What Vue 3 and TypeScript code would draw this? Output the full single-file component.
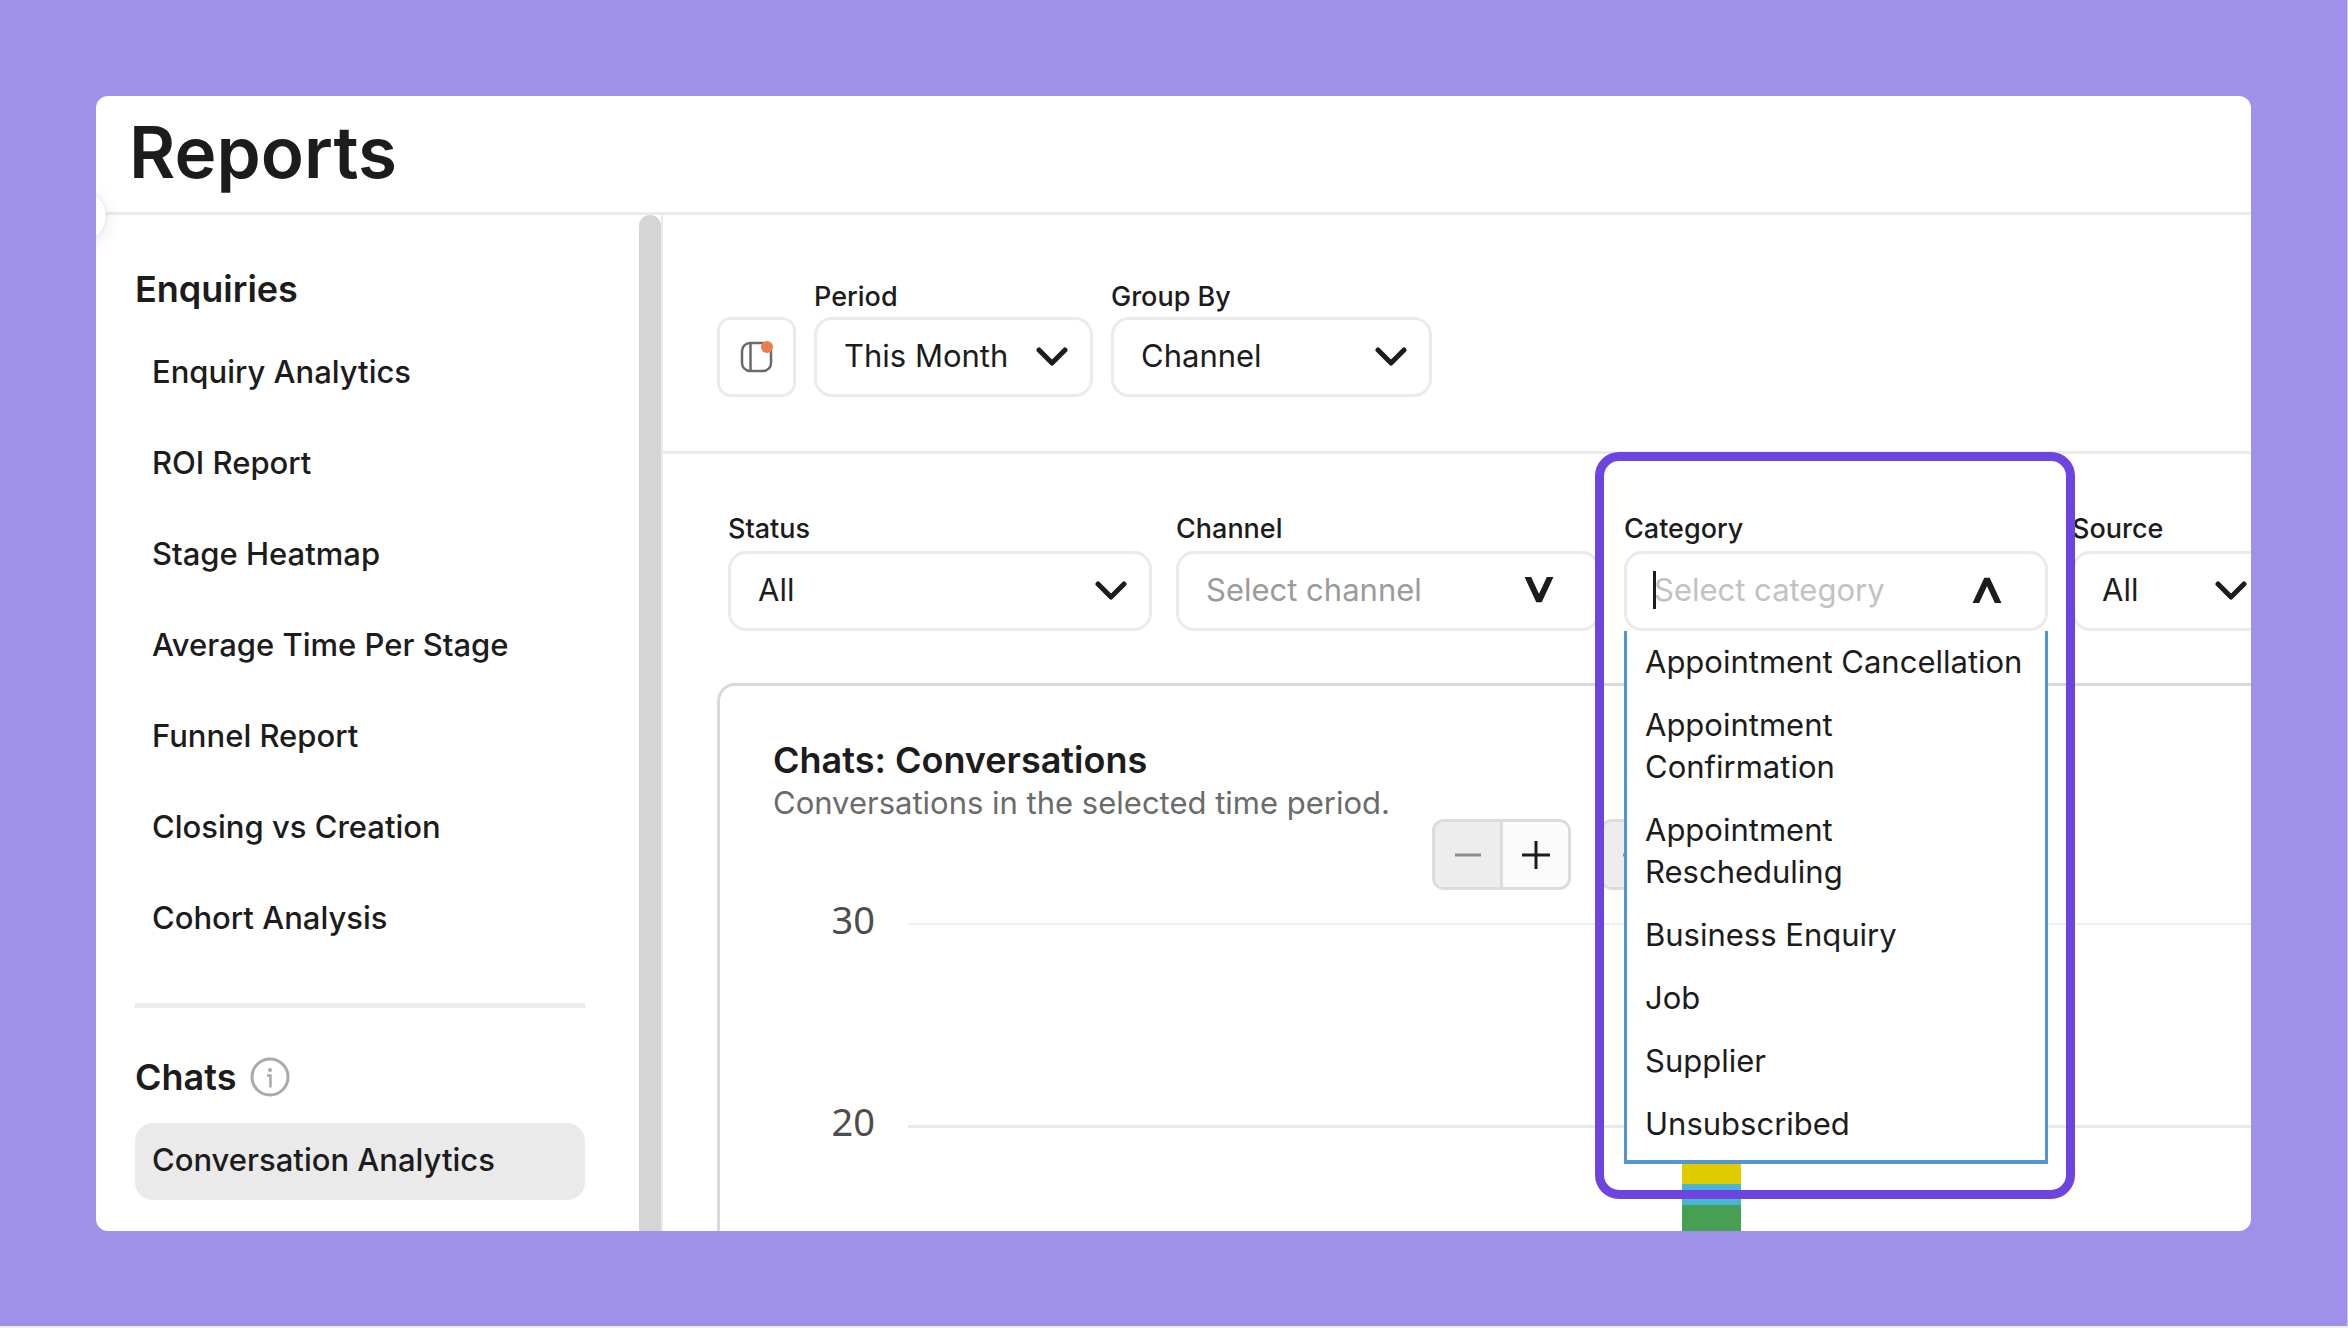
<script setup lang="ts">
import { ref } from 'vue'

interface Segment {
  name: string
  height: number
  color: string
}

const enquiryReports: string[] = [
  'Enquiry Analytics',
  'ROI Report',
  'Stage Heatmap',
  'Average Time Per Stage',
  'Funnel Report',
  'Closing vs Creation',
  'Cohort Analysis',
]
const chatReports: string[] = ['Conversation Analytics']
const activeReport = ref('Conversation Analytics')

const categories: string[] = [
  'Appointment Cancellation',
  'Appointment Confirmation',
  'Appointment Rescheduling',
  'Business Enquiry',
  'Job',
  'Supplier',
  'Unsubscribed',
]

const period = ref('This Month')
const groupBy = ref('Channel')
const status = ref('All')
const source = ref('All')
const channel = ref('')
const category = ref('')

const ticks: number[] = [30, 20]
const segments: Segment[] = [
  { name: 'yellow', height: 60, color: '#e0cb00' },
  { name: 'blue', height: 21, color: '#47b6d2' },
  { name: 'green', height: 200, color: '#479f53' },
]
</script>

<template>
  <div class="page">
    <div class="window">
      <header class="title-bar">
        <h1>Reports</h1>
      </header>
      <button class="collapse" type="button" aria-label="Collapse menu"></button>

      <div class="body">
        <aside class="sidebar">
          <nav class="nav">
            <h2>Enquiries</h2>
            <ul>
              <li v-for="item in enquiryReports" :key="item">
                <a href="#" :class="{ active: item === activeReport }" @click.prevent="activeReport = item">{{ item }}</a>
              </li>
            </ul>
            <hr />
            <h2>
              Chats
              <svg class="info" viewBox="0 0 40 40" aria-hidden="true">
                <circle cx="20" cy="20" r="18" fill="none" stroke="#a9a9a9" stroke-width="3" />
                <circle cx="20" cy="13" r="2" fill="#a9a9a9" />
                <path d="M17 18.500h3.500v12" fill="none" stroke="#a9a9a9" stroke-width="2.500" />
              </svg>
            </h2>
            <ul>
              <li v-for="item in chatReports" :key="item">
                <a href="#" :class="{ active: item === activeReport }" @click.prevent="activeReport = item">{{ item }}</a>
              </li>
            </ul>
          </nav>
          <div class="scrollbar"></div>
        </aside>

        <main class="main">
          <div class="toolbar">
            <button class="icon-button" type="button" aria-label="Toggle filters">
              <svg viewBox="0 0 36 36" aria-hidden="true">
                <rect x="3" y="4" width="29" height="28" rx="8" fill="none" stroke="#6a6a6a" stroke-width="2.500" />
                <path d="M11.500 4v28" stroke="#6a6a6a" stroke-width="2.500" />
                <circle cx="28" cy="8" r="6" fill="#ee7b4b" />
              </svg>
            </button>
            <div class="field period">
              <label for="period">Period</label>
              <div class="control">
                <select id="period" v-model="period"><option>This Month</option></select>
                <svg class="chevron" viewBox="0 0 32 20" aria-hidden="true"><path d="M3 3l13 13L29 3" /></svg>
              </div>
            </div>
            <div class="field group">
              <label for="group">Group By</label>
              <div class="control">
                <select id="group" v-model="groupBy"><option>Channel</option></select>
                <svg class="chevron" viewBox="0 0 32 20" aria-hidden="true"><path d="M3 3l13 13L29 3" /></svg>
              </div>
            </div>
          </div>

          <div class="filters">
            <div class="field">
              <label for="status">Status</label>
              <div class="control">
                <select id="status" v-model="status"><option>All</option></select>
                <svg class="chevron" viewBox="0 0 32 20" aria-hidden="true"><path d="M3 3l13 13L29 3" /></svg>
              </div>
            </div>
            <div class="field">
              <label for="channel">Channel</label>
              <div class="control">
                <input id="channel" v-model="channel" type="text" placeholder="Select channel" />
                <svg class="arrow" viewBox="0 0 30 26" aria-hidden="true"><path d="M2 -4L15 24L28 -4" /></svg>
              </div>
            </div>
            <div class="field category">
              <label for="category">Category</label>
              <div class="control">
                <input id="category" v-model="category" type="text" placeholder="Select category" />
                <span class="caret"></span>
                <svg class="arrow" viewBox="0 0 30 26" aria-hidden="true"><path d="M2 30L15 2L28 30" /></svg>
                <ul class="menu" role="listbox" aria-label="Category">
                  <li v-for="item in categories" :key="item" role="option" @click="category = item">{{ item }}</li>
                </ul>
              </div>
              <div class="highlight"></div>
            </div>
            <div class="field source">
              <label for="source">Source</label>
              <div class="control">
                <select id="source" v-model="source"><option>All</option></select>
                <svg class="chevron" viewBox="0 0 32 20" aria-hidden="true"><path d="M3 3l13 13L29 3" /></svg>
              </div>
            </div>
          </div>

          <section class="card">
            <div class="card-head">
              <div class="titles">
                <h3>Chats: Conversations</h3>
                <p>Conversations in the selected time period.</p>
              </div>
              <div v-for="n in 2" :key="n" class="stepper">
                <button type="button" aria-label="Decrease" disabled>
                  <svg viewBox="0 0 30 30" aria-hidden="true"><path d="M2 15h26" stroke="#8c8c8c" stroke-width="3" /></svg>
                </button>
                <button type="button" aria-label="Increase">
                  <svg viewBox="0 0 30 30" aria-hidden="true"><path d="M1 15h28M15 1v28" stroke="#1c1c1c" stroke-width="3" /></svg>
                </button>
              </div>
            </div>

            <div class="chart">
              <div v-for="tick in ticks" :key="tick" class="tick">
                <span>{{ tick }}</span>
                <i></i>
              </div>
              <div class="bar">
                <div
                  v-for="segment in segments"
                  :key="segment.name"
                  :style="{ height: segment.height + 'px', background: segment.color }"
                ></div>
              </div>
            </div>
          </section>
        </main>
      </div>
    </div>
  </div>
</template>

<style>
body {
  margin: 0;
}
</style>

<style scoped>
* {
  box-sizing: border-box;
}

.page {
  display: flex;
  height: 100vh;
  padding: 96px 96px 95px;
  border-right: 1px solid #d4cef5;
  border-bottom: 2px solid #f1effb;
  background: #9f91ea;
  color: #1c1c1c;
  font-family: Inter, "Liberation Sans", sans-serif;
  font-size: 31px;
}

.window {
  position: relative;
  display: flex;
  flex: 1;
  flex-direction: column;
  min-width: 0;
  overflow: hidden;
  border-radius: 12px;
  background: #fff;
}

.title-bar {
  flex: none;
  height: 119px;
  padding: 12px 33px;
  border-bottom: 3px solid #ebebeb;
}

h1,
h2,
h3,
p,
ul {
  margin: 0;
  padding: 0;
  font-weight: 600;
  list-style: none;
}

h1 {
  font-size: 71px;
  line-height: 88px;
}

.collapse {
  position: absolute;
  top: 95px;
  left: -40px;
  width: 50px;
  height: 50px;
  padding: 0;
  border: 0;
  border-radius: 50%;
  background: #fff;
  box-shadow: 0 4px 20px #00000018, 0 0 3px #00000020;
}

.body {
  display: flex;
  flex: 1;
  min-height: 0;
}

.sidebar {
  display: flex;
  flex: none;
  width: 567px;
  overflow: hidden;
  border-right: 2px solid #ebebeb;
}

.nav {
  flex: 1;
  padding: 52px 54px 0 39px;
}

h2 {
  display: flex;
  align-items: center;
  gap: 14px;
  height: 44px;
  margin-bottom: 24px;
  font-size: 36px;
  line-height: 44px;
}

.info {
  width: 40px;
  height: 40px;
}

.nav li {
  margin-bottom: 14px;
}

.nav a {
  display: block;
  height: 77px;
  padding: 16px 17px;
  border-radius: 18px;
  color: inherit;
  font-weight: 500;
  line-height: 42px;
  text-decoration: none;
}

.nav a.active {
  background: #eaeaea;
}

hr {
  height: 5px;
  margin: 45px 0 47px;
  border: 0;
  background: #ebebeb;
}

.scrollbar {
  width: 22px;
  border-radius: 11px 11px 0 0;
  background: #d5d5d5;
}

.main {
  flex: 1;
  min-width: 0;
  overflow: hidden;
}

.toolbar {
  display: flex;
  align-items: flex-end;
  gap: 18px;
  height: 239px;
  padding: 0 54px;
  border-bottom: 3px solid #ebebeb;
}

.toolbar .field {
  padding-bottom: 54px;
}

.toolbar label {
  margin-bottom: 4px;
}

.icon-button {
  display: grid;
  place-items: center;
  width: 79px;
  height: 80px;
  margin-bottom: 54px;
  padding: 0;
  border: 3px solid #ebebeb;
  border-radius: 14px;
  background: #fff;
}

.icon-button svg {
  width: 36px;
  height: 36px;
}

.field {
  position: relative;
  flex: none;
  width: 424px;
}

.field.period {
  width: 279px;
}

.field.group {
  width: 321px;
}

.field.source {
  width: 200px;
}

label {
  display: block;
  margin-bottom: 6px;
  font-size: 27px;
  font-weight: 500;
  line-height: 32px;
}

.control {
  position: relative;
}

select,
input {
  display: block;
  width: 100%;
  height: 80px;
  padding: 0 27px 3px;
  border: 3px solid #ebebeb;
  border-radius: 18px;
  outline: 0;
  background: #fff;
  color: #1c1c1c;
  font: inherit;
  appearance: none;
}

input::placeholder {
  color: #9b9b9b;
  opacity: 1;
}

.category input::placeholder {
  color: #c2c2c2;
}

.chevron {
  position: absolute;
  top: 30px;
  right: 25px;
  width: 32px;
  height: 20px;
  fill: none;
  stroke: #1c1c1c;
  stroke-width: 5;
  stroke-linecap: round;
  stroke-linejoin: round;
  pointer-events: none;
}

.arrow {
  position: absolute;
  top: 26px;
  right: 46px;
  width: 30px;
  height: 26px;
  overflow: hidden;
  fill: none;
  stroke: #1c1c1c;
  stroke-width: 6;
  stroke-linejoin: bevel;
  pointer-events: none;
}

.caret {
  position: absolute;
  top: 20px;
  left: 29px;
  width: 3px;
  height: 38px;
  background: #1c1c1c;
}

.filters {
  display: flex;
  gap: 24px;
  padding: 59px 0 52px 65px;
}

.menu {
  position: absolute;
  z-index: 2;
  top: 80px;
  right: 0;
  left: 0;
  padding: 2px 0;
  border: 3px solid #5596d0;
  border-top: 0;
  border-bottom-width: 4px;
  background: #fff;
}

.menu li {
  padding: 8px 16px 13px 18px;
  font-weight: 400;
  line-height: 42px;
}

.highlight {
  position: absolute;
  z-index: 3;
  top: -61px;
  left: -29px;
  width: 480px;
  height: 747px;
  border: 9px solid #6e44e0;
  border-radius: 24px;
  pointer-events: none;
}

.card {
  height: 800px;
  margin: 0 -40px 0 54px;
  padding: 52px 0 0 53px;
  border: 3px solid #d9d9d9;
  border-radius: 18px;
}

.card-head {
  display: flex;
  align-items: flex-end;
  gap: 29px;
  height: 152px;
}

.titles {
  align-self: flex-start;
  margin-right: 13px;
}

h3 {
  font-size: 36px;
  line-height: 44px;
}

p {
  color: #6b6b6b;
  font-weight: 400;
  line-height: 42px;
}

.stepper {
  display: flex;
  width: 139px;
  height: 71px;
  overflow: hidden;
  border: 3px solid #dcdcdc;
  border-radius: 12px;
}

.stepper button {
  display: grid;
  flex: 1;
  place-items: center;
  padding: 0;
  border: 0;
  background: #fbfbfb;
}

.stepper button:disabled {
  border-right: 3px solid #dcdcdc;
  background: #ededed;
}

.stepper svg {
  width: 30px;
  height: 30px;
}

.chart {
  position: relative;
  display: flex;
  flex-direction: column;
  gap: 162px;
  padding-top: 14px;
}

.tick {
  display: flex;
  align-items: center;
  gap: 33px;
  height: 40px;
}

.tick span {
  width: 102px;
  padding-bottom: 10px;
  color: #4d4d4d;
  font-family: "Noto Sans", sans-serif;
  font-size: 38px;
  line-height: 40px;
  text-align: right;
}

.tick i {
  flex: 1;
  height: 3px;
  background: #e7eaeb;
}

.tick:first-child i {
  height: 2px;
  background: #edf0f0;
}

.bar {
  position: absolute;
  top: 234px;
  left: 909px;
  width: 59px;
}
</style>
